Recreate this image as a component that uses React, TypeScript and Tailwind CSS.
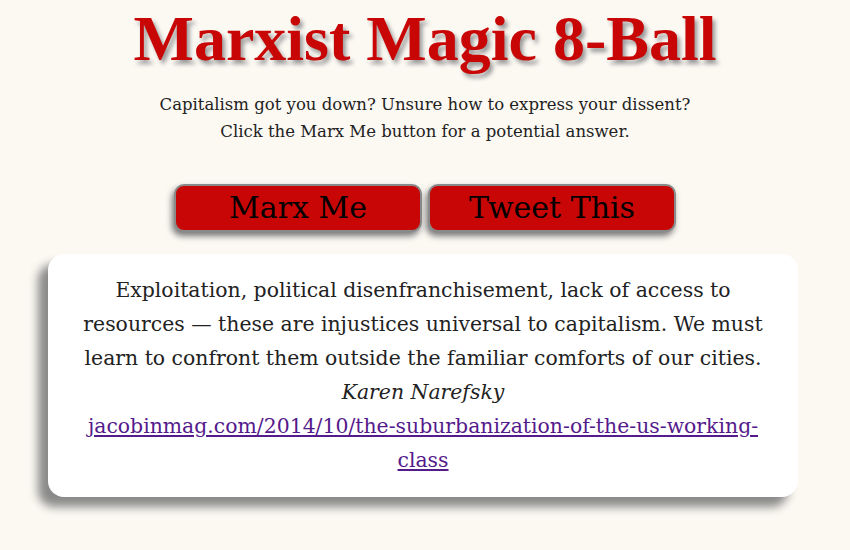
export default function App() {
  return (
    <div className="min-h-[550px] w-full bg-[#fcf9f3] flex flex-col items-center" style={{ fontFamily: '"DejaVu Serif", serif' }}>
      <h1 className="mt-[0px] text-[64px] leading-[78px] font-bold text-[#c80606] [text-shadow:3px_4px_4px_#9a9a9a]" style={{ fontFamily: '"Liberation Serif", serif' }}>
        Marxist Magic 8-Ball
      </h1>
      <p className="mt-[13px] text-[16.5px] leading-[27px] text-[#222] text-center">
        Capitalism got you down? Unsure how to express your dissent?
        <br />
        Click the Marx Me button for a potential answer.
      </p>
      <div className="mt-[39px] flex gap-[6px]">
        <button className="w-[248px] h-[48px] rounded-[10px] bg-[#c80606] border-2 border-[#8a8a8a] text-black text-[30px] leading-none shadow-[-2px_4px_6px_#777]">
          Marx Me
        </button>
        <button className="w-[248px] h-[48px] rounded-[10px] bg-[#c80606] border-2 border-[#8a8a8a] text-black text-[30px] leading-none shadow-[-2px_4px_6px_#777]">
          Tweet This
        </button>
      </div>
      <div className="mt-[22px] mr-[4px] w-[750px] bg-white rounded-[16px] px-[24px] pt-[19px] pb-[20px] text-center text-[20.4px] leading-[34px] text-[#222] shadow-[-10px_10px_10px_#8a8a8a]">
        <p>
          Exploitation, political disenfranchisement, lack of access to resources — these are injustices universal to capitalism. We must learn to confront them outside the familiar comforts of our cities.
        </p>
        <p className="italic">Karen Narefsky</p>
        <a href="#" className="underline text-[#551a8b]">
          jacobinmag.com/2014/10/the-suburbanization-of-the-us-working-class
        </a>
      </div>
    </div>
  );
}
